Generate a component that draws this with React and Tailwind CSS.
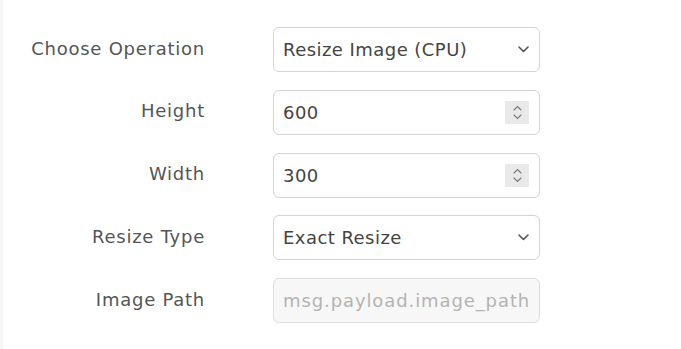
import React from 'react';

const font = { fontFamily: '"DejaVu Sans", "Open Sans", sans-serif' };

const Chevron = () => (
  <svg width="11" height="7" viewBox="0 0 11 7" fill="none" className="shrink-0">
    <path d="M1 1l4.5 4.5L10 1" stroke="#555" strokeWidth="1.6" strokeLinecap="round" strokeLinejoin="round" />
  </svg>
);

const Spinner = () => (
  <div className="w-[24px] h-[23px] bg-[#e9e9e9] flex flex-col items-center justify-center gap-[3px] shrink-0">
    <svg width="9" height="6" viewBox="0 0 9 6" fill="none">
      <path d="M1 5l3.5-3.5L8 5" stroke="#777" strokeWidth="1.1" strokeLinecap="round" />
    </svg>
    <svg width="9" height="6" viewBox="0 0 9 6" fill="none">
      <path d="M1 1l3.5 3.5L8 1" stroke="#777" strokeWidth="1.1" strokeLinecap="round" />
    </svg>
  </div>
);

const SelectBox = ({ value }) => (
  <div className="h-[45px] border border-[#d3d3d3] rounded-[6px] bg-white flex items-center justify-between pl-[9px] pr-[10px] text-[18px] tracking-[0.45px] text-[#444]">
    <span>{value}</span>
    <Chevron />
  </div>
);

const NumberBox = ({ value }) => (
  <div className="h-[45px] border border-[#d3d3d3] rounded-[6px] bg-white flex items-center justify-between pl-[9px] pr-[10px] text-[18px] tracking-[0.45px] text-[#444]">
    <span>{value}</span>
    <Spinner />
  </div>
);

const DisabledBox = ({ placeholder }) => (
  <div className="h-[45px] border border-[#dedede] rounded-[6px] bg-[#f7f7f7] flex items-center pl-[9px] text-[18px] tracking-[0.9px] text-[#b3b3b3] overflow-hidden whitespace-nowrap">
    <span>{placeholder}</span>
  </div>
);

const Label = ({ children }) => (
  <div className="text-right text-[18px] tracking-[0.75px] text-[#555] pb-[3px] whitespace-nowrap">{children}</div>
);

export default function App() {
  const rows = [
    { label: 'Choose Operation', field: <SelectBox value="Resize Image (CPU)" /> },
    { label: 'Height', field: <NumberBox value="600" /> },
    { label: 'Width', field: <NumberBox value="300" /> },
    { label: 'Resize Type', field: <SelectBox value="Exact Resize" /> },
    { label: 'Image Path', field: <DisabledBox placeholder="msg.payload.image_path" /> },
  ];

  return (
    <div className="w-[681px] h-[349px] bg-white border-l-[3px] border-[#f5f5f5]" style={font}>
      <div className="pt-[27px] grid grid-cols-[202px_267px] gap-x-[68px] gap-y-[17.75px] items-center">
        {rows.map((row) => (
          <React.Fragment key={row.label}>
            <Label>{row.label}</Label>
            {row.field}
          </React.Fragment>
        ))}
      </div>
    </div>
  );
}
